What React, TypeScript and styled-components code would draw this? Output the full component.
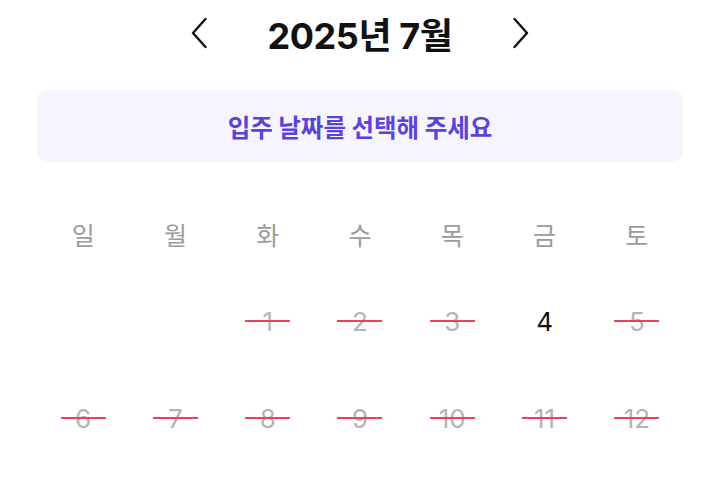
import styled, { createGlobalStyle } from "styled-components";

const GlobalStyle = createGlobalStyle`
  body {
    margin: 0;
    background: #ffffff;
    font-family: "Inter", "Noto Sans CJK KR", sans-serif;
  }
`;

const weekdays = ["일", "월", "화", "수", "목", "금", "토"];

// null = empty cell before the 1st
const days: (number | null)[] = [null, null, 1, 2, 3, 4, 5, 6, 7, 8, 9, 10, 11, 12];
const available = [4];

const ChevronLeft = () => (
  <svg width="16" height="32" viewBox="0 0 16 32" fill="none">
    <path d="M14.5 2 L2 16 L14.5 30" stroke="#111" strokeWidth="2.4" strokeLinecap="round" strokeLinejoin="round" />
  </svg>
);

const ChevronRight = () => (
  <svg width="16" height="32" viewBox="0 0 16 32" fill="none">
    <path d="M1.5 2 L14 16 L1.5 30" stroke="#111" strokeWidth="2.4" strokeLinecap="round" strokeLinejoin="round" />
  </svg>
);

export default function App() {
  return (
    <>
      <GlobalStyle />
      <Page>
        <Header>
          <NavButton aria-label="이전 달">
            <ChevronLeft />
          </NavButton>
          <Title>2025년 7월</Title>
          <NavButton aria-label="다음 달">
            <ChevronRight />
          </NavButton>
        </Header>

        <Notice>입주 날짜를 선택해 주세요</Notice>

        <WeekRow>
          {weekdays.map((w) => (
            <Weekday key={w}>{w}</Weekday>
          ))}
        </WeekRow>

        <DaysGrid>
          {days.map((d, i) =>
            d === null ? (
              <DayCell key={`e${i}`} />
            ) : (
              <DayCell key={d}>
                <DayNumber $disabled={!available.includes(d)}>{d}</DayNumber>
              </DayCell>
            )
          )}
        </DaysGrid>
      </Page>
    </>
  );
}

const Page = styled.div`
  width: 720px;
  padding: 0 37px;
  box-sizing: border-box;
`;

const Header = styled.div`
  height: 66px;
  display: flex;
  align-items: center;
  justify-content: center;
  gap: 56px;
`;

const NavButton = styled.button`
  width: 24px;
  height: 36px;
  padding: 0;
  border: none;
  background: none;
  display: flex;
  align-items: center;
  justify-content: center;
  cursor: pointer;
`;

const Title = styled.h1`
  margin: 0;
  font-size: 36px;
  font-weight: 700;
  color: #111;
  letter-spacing: -0.4px;
`;

const Notice = styled.div`
  margin-top: 24px;
  height: 72px;
  border-radius: 9px;
  background: #f6f5fe;
  display: flex;
  align-items: center;
  justify-content: center;
  font-family: "Noto Sans CJK KR", sans-serif;
  font-size: 24.5px;
  font-weight: 700;
  color: #5b43d6;
`;

const WeekRow = styled.div`
  margin-top: 46px;
  display: grid;
  grid-template-columns: repeat(7, 1fr);
  height: 52px;
`;

const Weekday = styled.div`
  display: flex;
  align-items: center;
  justify-content: center;
  font-family: "Noto Sans CJK KR", sans-serif;
  font-size: 25px;
  font-weight: 400;
  color: #9b9b9b;
`;

const DaysGrid = styled.div`
  padding-top: 13px;
  display: grid;
  grid-template-columns: repeat(7, 1fr);
  grid-auto-rows: 97px;
`;

const DayCell = styled.div`
  display: flex;
  align-items: center;
  justify-content: center;
`;

const DayNumber = styled.span<{ $disabled: boolean }>`
  position: relative;
  min-width: 45px;
  text-align: center;
  font-size: 26px;
  font-weight: 400;
  line-height: 1;
  color: ${(p) => (p.$disabled ? "#b4b4b4" : "#111")};

  &::after {
    content: "";
    display: ${(p) => (p.$disabled ? "block" : "none")};
    position: absolute;
    left: 50%;
    top: 50%;
    width: 45px;
    height: 2px;
    margin-left: -22.5px;
    margin-top: -2px;
    background: #e4455b;
  }
`;
